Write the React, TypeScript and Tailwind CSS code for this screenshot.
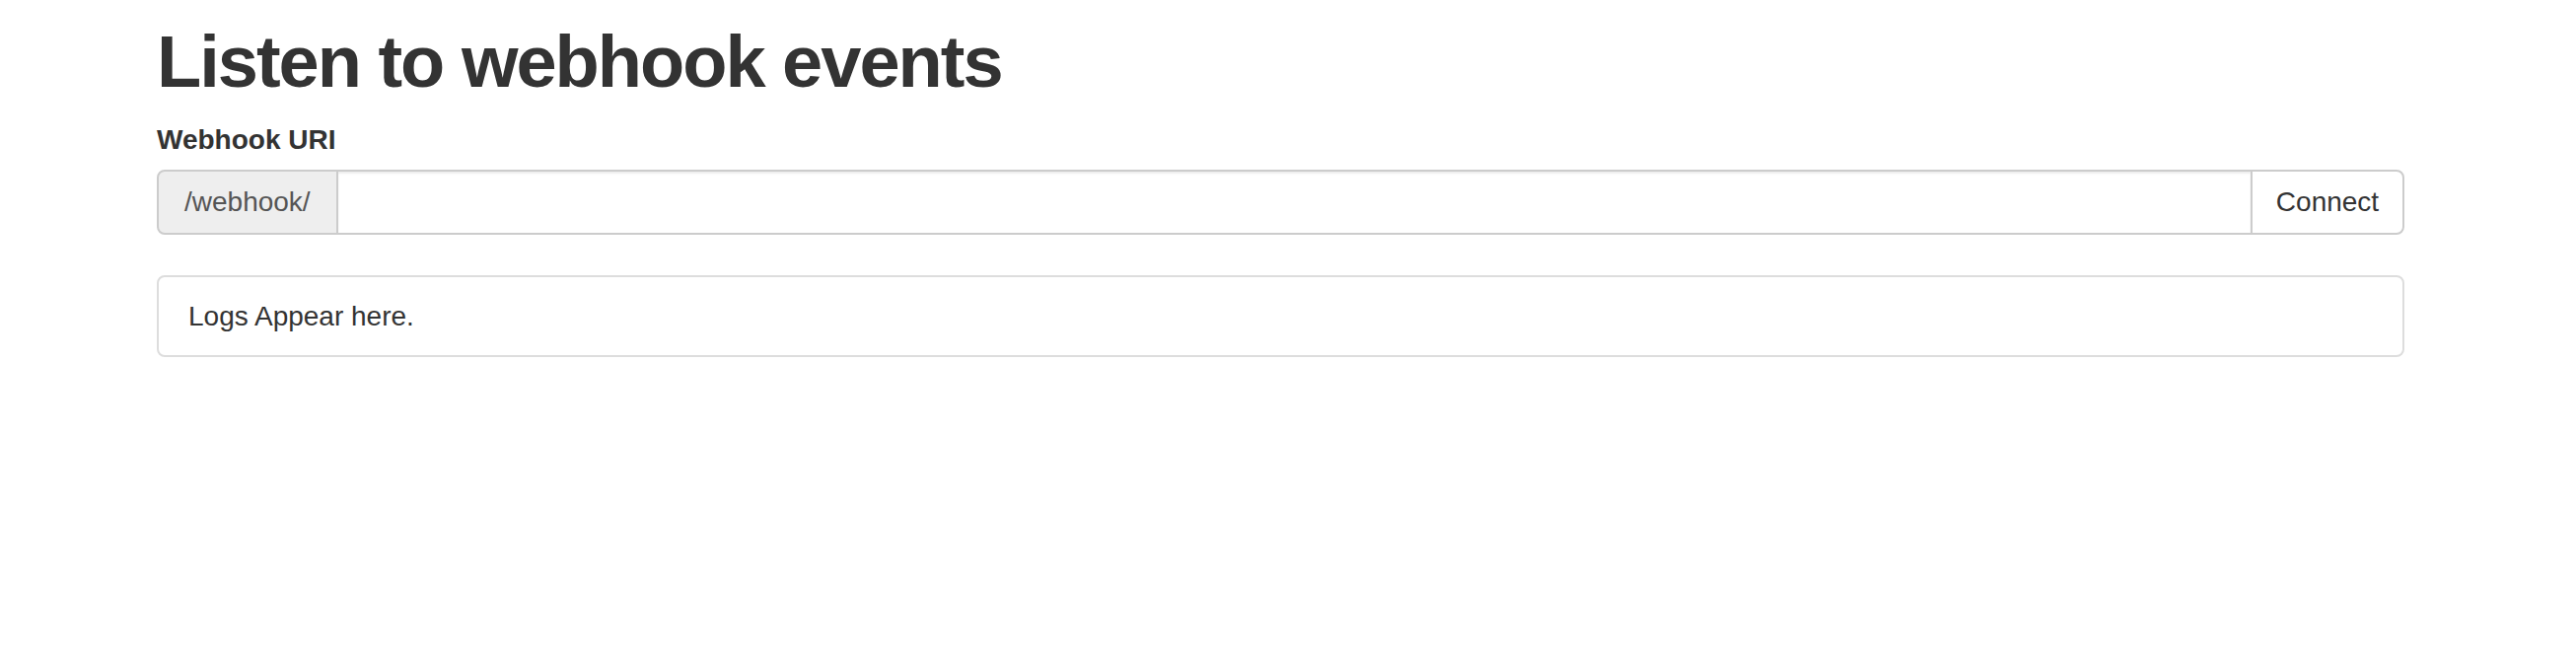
export default function App() {
  return (
    <div className="min-h-[660px] bg-white font-['Liberation_Sans',Arial,sans-serif] text-[#333]">
      <div className="ml-[159px] w-[2279px] pt-[22px]">
        <h1 className="text-[74px] font-bold leading-[82px] tracking-[-2px]">Listen to webhook events</h1>
        <div className="mt-[18px] text-[28px] font-bold leading-[40px]">Webhook URI</div>
        <div className="mt-[10px] flex h-[66px] text-[28px]">
          <span className="flex items-center rounded-l-[8px] border-2 border-[#ccc] bg-[#eee] px-[26px] text-[#555]">
            /webhook/
          </span>
          <input className="min-w-0 flex-1 border-y-2 border-[#ccc] bg-white px-[24px] shadow-[inset_0_2px_2px_rgba(0,0,0,0.075)] outline-none" />
          <button className="flex w-[156px] items-center justify-center rounded-r-[8px] border-2 border-[#ccc] bg-white text-[#333]">
            Connect
          </button>
        </div>
        <div className="mt-[41px] rounded-[8px] border-2 border-[#ddd] px-[30px] py-[19px] text-[28px] leading-[41px]">
          Logs Appear here.
        </div>
      </div>
    </div>
  );
}
